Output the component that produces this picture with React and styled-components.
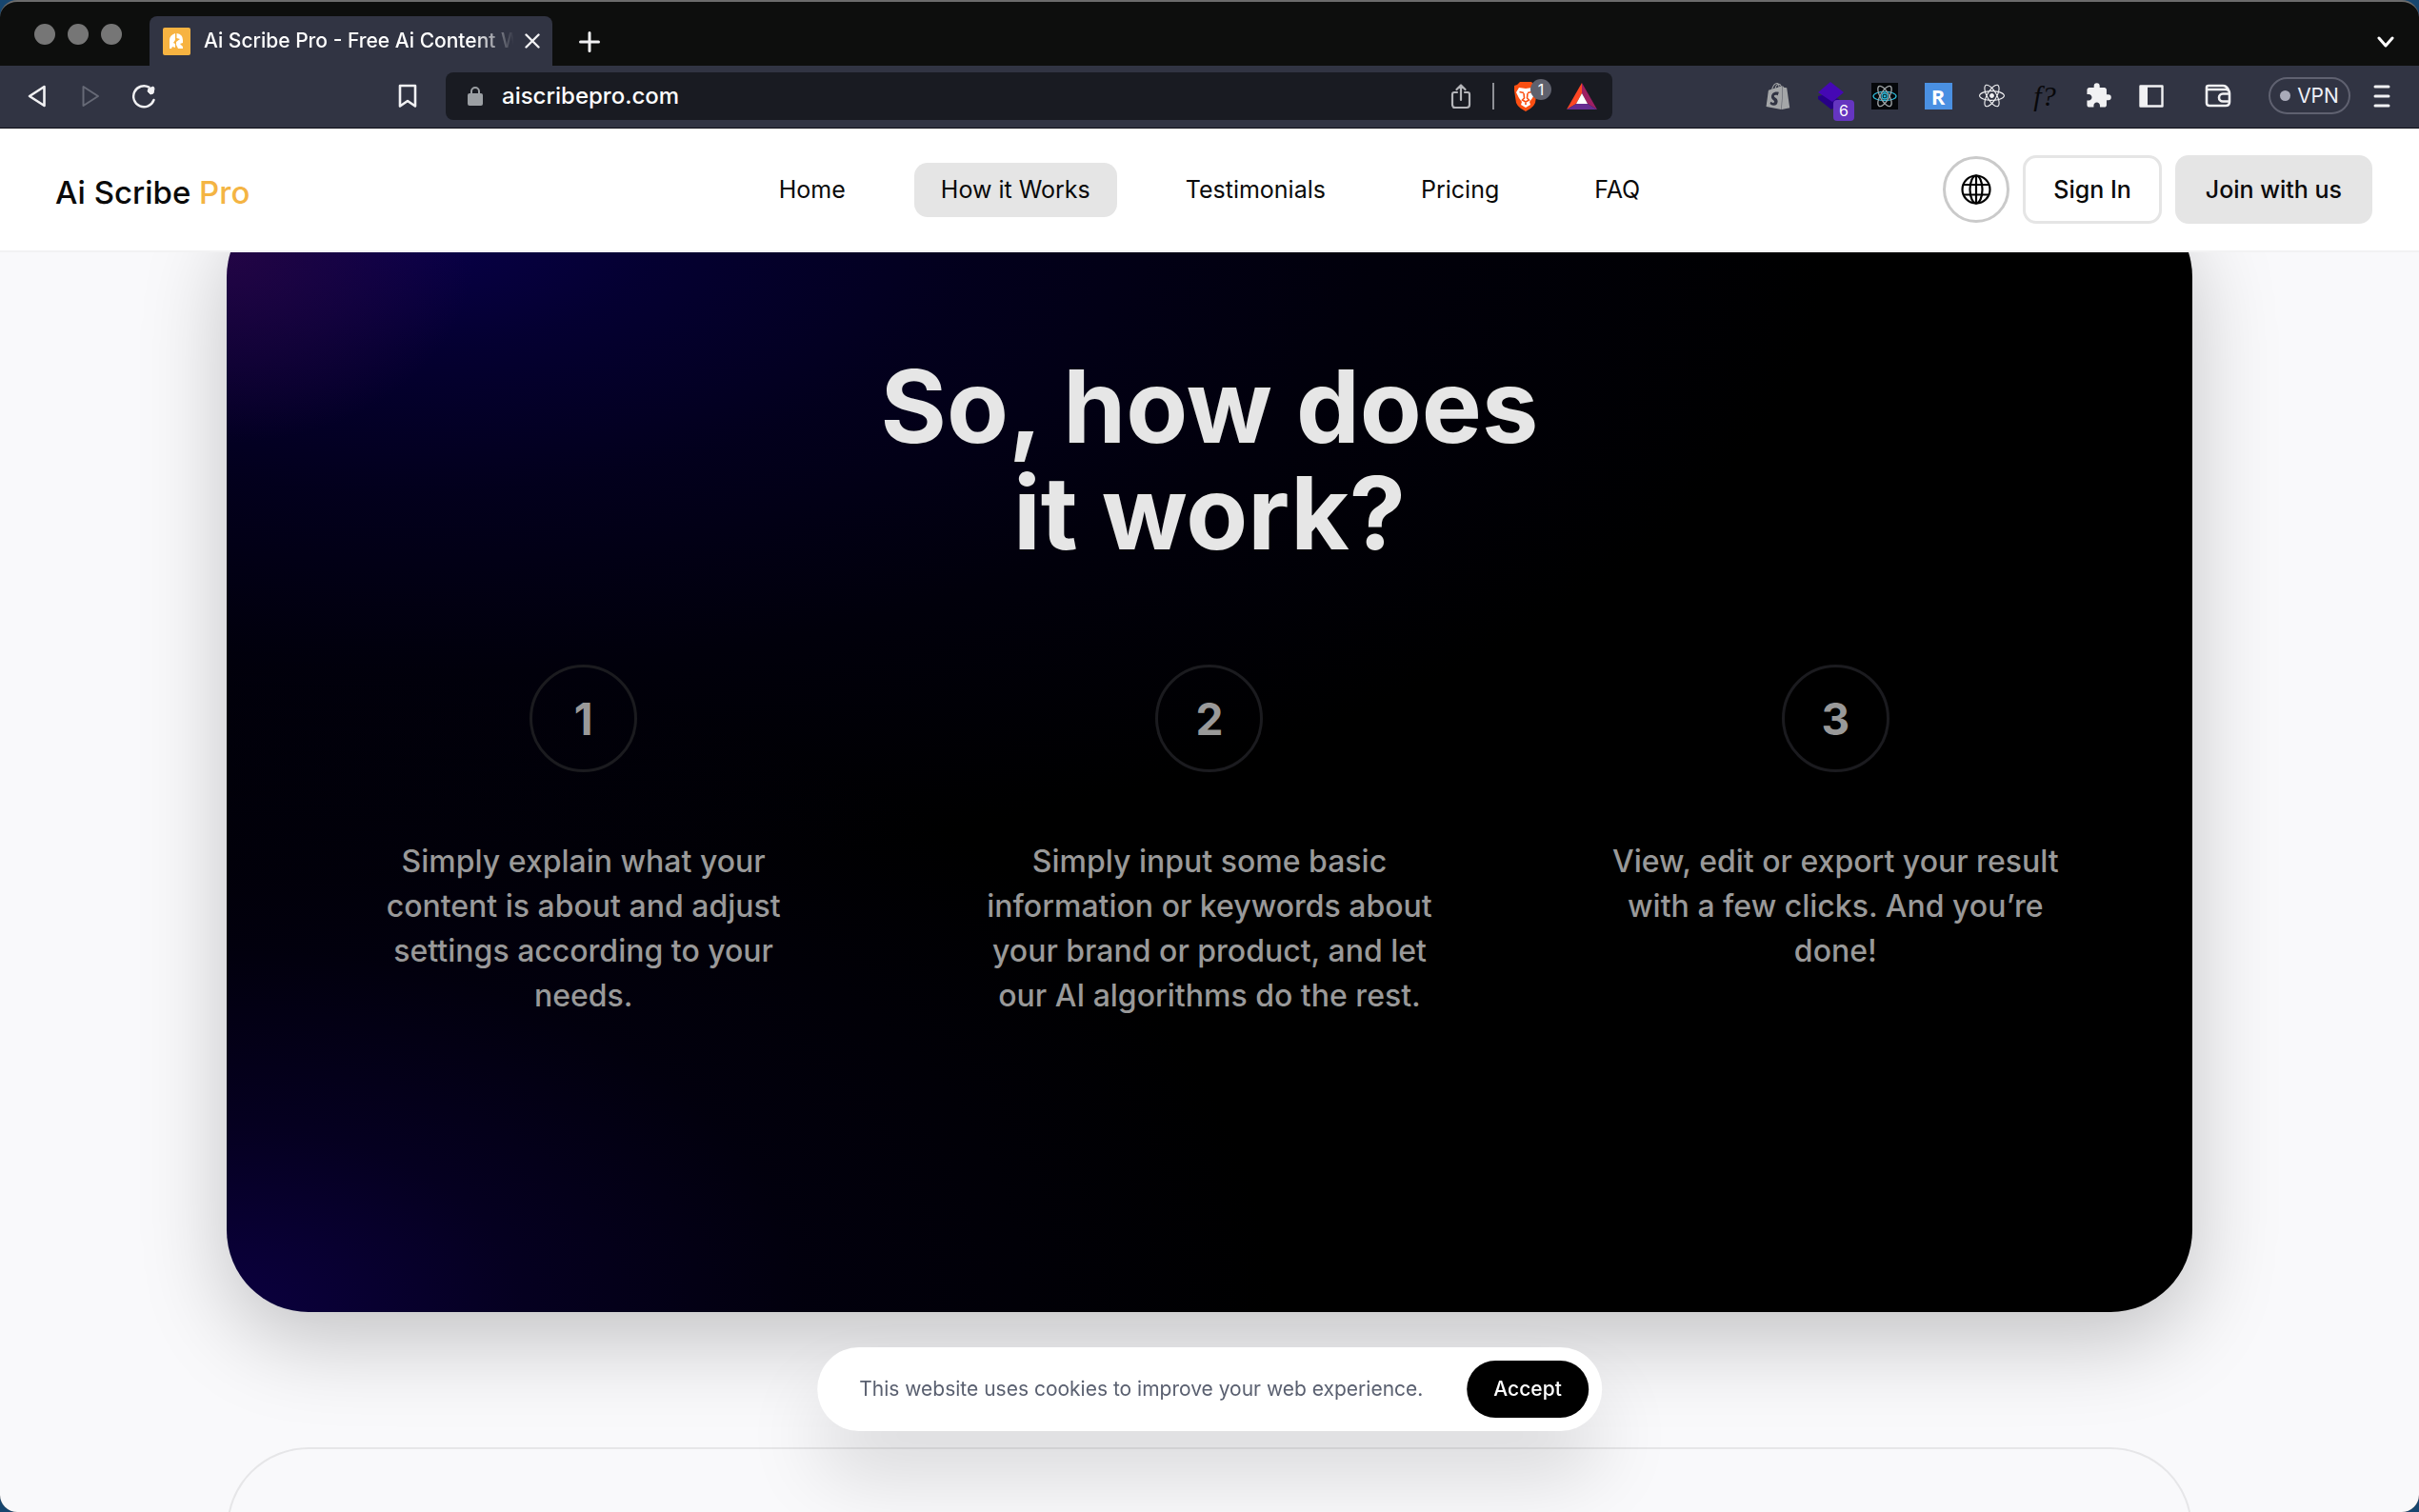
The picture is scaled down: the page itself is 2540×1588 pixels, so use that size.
import React from "react";
import styled, { createGlobalStyle } from "styled-components";
import { MdExtension } from "react-icons/md";
import { SiShopify } from "react-icons/si";
import { FaReact } from "react-icons/fa";

const GlobalStyle = createGlobalStyle`
  *, *::before, *::after { box-sizing: border-box; }
  body { margin: 0; background: #17466f; font-family: Inter, "Liberation Sans", sans-serif; }
  button, input { font-family: inherit; }
  svg { display: block; flex: none; }
`;

const BrowserWindow = styled.div`
  height: 100vh;
  display: flex;
  flex-direction: column;
  overflow: hidden;
  border-radius: 18px;
  border-top: 2px solid #6b6b6b;
  background: #0d0e0d;
`;

const TabStrip = styled.div`
  display: flex;
  align-items: flex-end;
  height: 67px;
  padding: 0 20px 0 36px;
`;

const TrafficLights = styled.div`
  display: flex;
  align-self: center;
  gap: 13px;
  width: 121px;
`;

const TrafficLight = styled.button`
  width: 22px;
  height: 22px;
  padding: 0;
  border: 0;
  border-radius: 50%;
  background: #767676;
`;

const Tab = styled.div`
  display: flex;
  align-items: center;
  width: 423px;
  height: 52px;
  padding: 0 13px 0 14px;
  border-radius: 8px 8px 0 0;
  background: #313443;
  color: #fff;
`;

const TabTitle = styled.span`
  flex: 1;
  margin: 0 12px 0 14px;
  overflow: hidden;
  white-space: nowrap;
  font-size: 21px;
  line-height: 28px;
  font-weight: 500;
  mask-image: linear-gradient(to right, #000 285px, transparent 326px);
`;

const IconButton = styled.button`
  position: relative;
  display: grid;
  place-items: center;
  flex: none;
  width: ${(p) => p.$w || 30}px;
  height: ${(p) => p.$h || 30}px;
  padding: 0;
  border: 0;
  background: none;
  color: ${(p) => p.$color || "#f1f1f3"};
`;

const NewTab = styled(IconButton)`
  align-self: center;
  margin: 16px auto 0 24px;
`;

const TabSearch = styled(IconButton)`
  align-self: center;
  margin-top: 16px;
`;

const Toolbar = styled.div`
  display: grid;
  grid-template-columns: 468px minmax(0, 1225px) 1fr;
  align-items: center;
  height: 66px;
  padding-bottom: 2px;
  background: #313443;
  border-bottom: 1px solid #0d0e16;
`;

const HistoryGroup = styled.div`
  display: flex;
  align-items: center;
  gap: 26px;
  padding: 0 30px 0 24px;
  > :last-child { margin-left: auto; }
`;

const AddressBar = styled.div`
  display: flex;
  align-items: center;
  height: 50px;
  padding: 0 16px 0 20px;
  border-radius: 8px;
  background: #191b22;
`;

const AddressInput = styled.input`
  flex: 1;
  min-width: 0;
  margin-left: 17px;
  padding: 0;
  border: 0;
  outline: 0;
  background: none;
  color: #fff;
  font-size: 24px;
  line-height: 34px;
  font-weight: 500;
`;

const Divider = styled.span`
  width: 2px;
  height: 28px;
  margin: 0 18px 0 22px;
  background: #8e9096;
`;

const Shields = styled(IconButton)`
  margin-right: 28px;
`;

const Count = styled.span`
  position: absolute;
  left: ${(p) => p.$left};
  top: ${(p) => p.$top};
  display: grid;
  place-items: center;
  width: 22px;
  height: 22px;
  border-radius: ${(p) => (p.$round ? "50%" : "4px")};
  background: ${(p) => (p.$round ? "#5f616d" : "#6535c0")};
  color: #fff;
  font-size: 16px;
  line-height: 22px;
`;

const Extensions = styled.div`
  display: flex;
  align-items: center;
  justify-content: flex-end;
  gap: 26px;
  padding-right: 24px;
`;

const LetterTile = styled.span`
  display: grid;
  place-items: center;
  width: 29px;
  height: 28px;
  background: ${(p) => p.$bg};
  color: #fff;
  font: 700 22px/28px "Open Sans", sans-serif;
`;

const Script = styled.span`
  color: #08080a;
  font: italic 30px/30px "Liberation Serif", serif;
`;

const Wallet = styled(IconButton)`
  margin-left: 14px;
`;

const VpnButton = styled.button`
  display: flex;
  align-items: center;
  justify-content: center;
  gap: 7px;
  width: 86px;
  height: 39px;
  margin: 0 -8px 0 12px;
  padding: 0;
  border: 2px solid #5f6170;
  border-radius: 20px;
  background: none;
  color: #eef0f8;
  font-size: 21px;
  line-height: 24px;
  &::before {
    content: "";
    width: 11px;
    height: 11px;
    border-radius: 50%;
    background: #a9abb9;
  }
`;

const SiteHeader = styled.header`
  position: relative;
  z-index: 2;
  display: grid;
  grid-template-columns: 1fr auto 1fr;
  align-items: center;
  flex: none;
  height: 130px;
  padding: 0 49px;
  background: #fff;
  border-bottom: 2px solid #f2f2f3;
`;

const Logo = styled.a`
  padding: 6px 0 0 9px;
  color: #0a0a0a;
  font-size: 33px;
  line-height: 36px;
  font-weight: 500;
  text-decoration: none;
  span { color: #f4b443; }
`;

const SiteNav = styled.nav`
  display: flex;
  gap: 44px;
`;

const NavLink = styled.a`
  padding: 0 28px;
  border-radius: 14px;
  background: ${(p) => (p.$active ? "#e5e5e5" : "transparent")};
  color: #0a0a0a;
  font-size: 25px;
  line-height: 57px;
  text-decoration: none;
`;

const Actions = styled.div`
  display: flex;
  align-items: center;
  justify-content: flex-end;
  gap: 14px;
`;

const LanguageButton = styled.button`
  display: grid;
  place-items: center;
  width: 70px;
  height: 70px;
  padding: 0;
  border: 3px solid #cacaca;
  border-radius: 50%;
  background: #fff;
`;

const ActionButton = styled.button`
  height: 72px;
  padding: 0 29px;
  border: 3px solid #e5e5e5;
  border-radius: 14px;
  background: ${(p) => (p.$filled ? "#e5e5e5" : "#fff")};
  color: #0a0a0a;
  font-size: 25px;
  line-height: 30px;
  font-weight: 500;
`;

const Page = styled.main`
  flex: 1;
  min-height: 0;
  overflow: hidden;
  padding: 0 238px;
  background: #f9f9fb;
`;

const HowItWorks = styled.section`
  margin: -60px 0 142px;
  padding: 166px 46px 309px;
  border-radius: 86px;
  text-align: center;
  background:
    radial-gradient(ellipse 260px 200px at 0 60px, rgba(42, 6, 72, 0.8), transparent),
    radial-gradient(ellipse 1500px 680px at 9% 40px, #08004a, rgba(5, 0, 58, 0.85) 18%, rgba(4, 0, 44, 0.65) 40%, rgba(2, 0, 22, 0.5) 68%, transparent),
    radial-gradient(ellipse 1100px 700px at 0 100%, #0b0040, rgba(6, 0, 38, 0.85) 28%, rgba(3, 0, 22, 0.6) 55%, transparent),
    #000;
  box-shadow: 0 30px 90px rgba(0, 0, 0, 0.22);
`;

const Title = styled.h2`
  margin: 0 0 103px;
  color: #e6e6e6;
  font-size: 106px;
  line-height: 112px;
  font-weight: 700;
`;

const Steps = styled.ol`
  display: grid;
  grid-template-columns: repeat(3, 1fr);
  margin: 0;
  padding: 0;
  list-style: none;
`;

const Step = styled.li`
  display: flex;
  flex-direction: column;
  align-items: center;
  gap: 70px;
`;

const StepNumber = styled.span`
  display: grid;
  place-items: center;
  width: 113px;
  height: 113px;
  border: 3px solid #1b1b1f;
  border-radius: 50%;
  color: #999;
  font-size: 46px;
  line-height: 56px;
  font-weight: 700;
`;

const StepText = styled.p`
  max-width: 490px;
  margin: 0;
  color: #999;
  font-size: 32px;
  line-height: 47px;
  font-weight: 500;
`;

const NextSection = styled.section`
  height: 400px;
  border: 2px solid #e6e6e8;
  border-radius: 86px;
`;

const CookieNotice = styled.aside`
  position: fixed;
  left: 50%;
  bottom: 85px;
  transform: translateX(-50%);
  z-index: 3;
  display: flex;
  align-items: center;
  gap: 46px;
  padding: 14px 14px 14px 44px;
  border-radius: 44px;
  background: #fff;
  white-space: nowrap;
  box-shadow: 0 48px 80px rgba(0, 0, 0, 0.13);
`;

const CookieText = styled.p`
  margin: 0;
  color: #5a6070;
  font-size: 21px;
  line-height: 28px;
`;

const AcceptButton = styled.button`
  height: 60px;
  padding: 0 28px;
  border: 0;
  border-radius: 30px;
  background: #000;
  color: #fff;
  font-size: 21px;
  line-height: 28px;
  font-weight: 500;
`;

const Stroke = ({ w, h, sw = 2, children }) => (
  <svg width={w} height={h} viewBox={`0 0 ${w} ${h}`} fill="none" stroke="currentColor" strokeWidth={sw} strokeLinecap="round" strokeLinejoin="round" aria-hidden="true">
    {children}
  </svg>
);

const Favicon = () => (
  <svg width="29" height="29" viewBox="0 0 29 29" aria-hidden="true">
    <rect width="29" height="29" rx="2" fill="#f7b341" />
    <path d="M7 22v-9q0-5 6-7v7l-2 3 2 1v4l-3-1-1 2z" fill="#fff" />
    <path d="M14.5 6Q21 7 21 13v3l-3 1 3 3v2h-5l-2-4v-3l4-3-3.5-1z" fill="#fff" />
  </svg>
);

const Globe = () => (
  <Stroke w={34} h={34} sw={2.2}>
    <circle cx="17" cy="17" r="14.5" />
    <ellipse cx="17" cy="17" rx="6.5" ry="14.5" />
    <path d="M17 2.5v29M4.5 12h25M4.5 22.5h25" />
  </Stroke>
);

const BraveLion = () => (
  <svg width="26" height="32" viewBox="0 0 26 32" aria-hidden="true">
    <path d="M7 1h12l3 3 3 1v5l-2 13q-1 3-5 6l-5 3-5-3q-4-3-5-6L1 10V5l3-1z" fill="#fb4f12" />
    <path d="M6 7l7 1 7-1 3 5-3 6-3 4 1 3-5 3-5-3 1-3-3-4-3-6z" fill="#fff" />
    <path d="M6.5 11.5l4.5 1M19.5 11.5l-4.5 1M11 13l.5 5-2 2 3.5 2 3.5-2-2-2 .5-5M13 23v2" fill="none" stroke="#fb4f12" strokeWidth="1.6" />
  </svg>
);

const BatTriangle = () => (
  <svg width="32" height="28" viewBox="0 0 32 28" aria-hidden="true">
    <path d="M16 0L0 28l10-6 6-11z" fill="#ff4724" />
    <path d="M16 0l16 28-10-6-6-11z" fill="#9e1f63" />
    <path d="M0 28h32l-10-6H10z" fill="#662d91" />
    <path d="M16 11l6 11H10z" fill="#fff" />
  </svg>
);

const Layers = () => (
  <svg width="30" height="30" viewBox="0 0 30 30" aria-hidden="true">
    <path d="M1 15l4-1 18 4v5l-8 6L1 18z" fill="#270087" />
    <path d="M14 0l14 11-12 10L1 11z" fill="#4508b4" />
  </svg>
);

const ReactTile = () => (
  <svg width="28" height="28" viewBox="0 0 28 28" aria-hidden="true">
    <rect width="28" height="28" fill="#05070a" />
    <g fill="none" strokeWidth="1.3">
      <ellipse cx="14" cy="14" rx="12" ry="4.6" stroke="#2db7d6" />
      <ellipse cx="14" cy="14" rx="12" ry="4.6" stroke="#9da2a4" transform="rotate(60 14 14)" />
      <ellipse cx="14" cy="14" rx="12" ry="4.6" stroke="#9da2a4" transform="rotate(120 14 14)" />
      <circle cx="14" cy="14" r="3" stroke="#2db7d6" />
    </g>
    <circle cx="14" cy="14" r="1.5" fill="#2db7d6" />
  </svg>
);

const steps = [
  "Simply explain what your content is about and adjust settings according to your needs.",
  "Simply input some basic information or keywords about your brand or product, and let our AI algorithms do the rest.",
  "View, edit or export your result with a few clicks. And you’re done!",
];

const links = ["Home", "How it Works", "Testimonials", "Pricing", "FAQ"];

export default function App() {
  return (
    <>
      <GlobalStyle />
      <BrowserWindow>
        <TabStrip>
          <TrafficLights>
            <TrafficLight aria-label="Close window" />
            <TrafficLight aria-label="Minimize window" />
            <TrafficLight aria-label="Zoom window" />
          </TrafficLights>
          <Tab>
            <Favicon />
            <TabTitle>Ai Scribe Pro - Free Ai Content W</TabTitle>
            <IconButton $w={16} aria-label="Close tab">
              <Stroke w={16} h={16} sw={2.4}><path d="M1.5 1.5l13 13M14.5 1.5l-13 13" /></Stroke>
            </IconButton>
          </Tab>
          <NewTab aria-label="New tab">
            <Stroke w={22} h={22} sw={3}><path d="M11 1.5v19M1.5 11h19" /></Stroke>
          </NewTab>
          <TabSearch aria-label="Search tabs" $color="#fff">
            <Stroke w={18} h={12} sw={3}><path d="M2 2l7 8 7-8" /></Stroke>
          </TabSearch>
        </TabStrip>

        <Toolbar>
          <HistoryGroup>
            <IconButton aria-label="Back">
              <Stroke w={20} h={24} sw={2.6}><path d="M17.5 2v20L2 12z" /></Stroke>
            </IconButton>
            <IconButton aria-label="Forward" $color="#666976">
              <Stroke w={20} h={24} sw={2}><path d="M2.5 2v20L18 12z" /></Stroke>
            </IconButton>
            <IconButton aria-label="Reload">
              <svg width="26" height="26" viewBox="0 0 26 26" aria-hidden="true">
                <path d="M18.5 3.6A11 11 0 1 0 23.5 17" fill="none" stroke="currentColor" strokeWidth="2.4" strokeLinecap="round" />
                <path d="M18 5l5-2 1 2-1 5-3 1-3-3z" fill="currentColor" stroke="currentColor" strokeLinejoin="round" />
              </svg>
            </IconButton>
            <IconButton $w={20} aria-label="Bookmark">
              <Stroke w={20} h={26} sw={2.6}><path d="M2 2h16v21.5l-8-5.5-8 5.5z" /></Stroke>
            </IconButton>
          </HistoryGroup>
          <AddressBar>
            <IconButton $w={22} $color="#9b9fa3" aria-label="Site information">
              <svg width="16" height="20" viewBox="0 0 16 20" aria-hidden="true">
                <rect y="7" width="16" height="13" rx="2" fill="currentColor" />
                <path d="M4 8V5a4 4 0 0 1 8 0v3" fill="none" stroke="currentColor" strokeWidth="2" />
              </svg>
            </IconButton>
            <AddressInput aria-label="Address" defaultValue="aiscribepro.com" />
            <IconButton $w={22} $color="#b4b5b9" aria-label="Share">
              <Stroke w={22} h={28} sw={2.2}><path d="M7 10H4q-2 0-2 2v11q0 3 3 3h12q3 0 3-3V12q0-2-2-2h-3M11 18V3M6.5 7L11 2.5 15.5 7" /></Stroke>
            </IconButton>
            <Divider />
            <Shields $w={30} $h={34} aria-label="Shields">
              <BraveLion />
              <Count $round $left="20px" $top="-1px">1</Count>
            </Shields>
            <IconButton $w={32} aria-label="Rewards"><BatTriangle /></IconButton>
          </AddressBar>
          <Extensions>
            <IconButton $color="#a4a6a8" aria-label="Shopify"><SiShopify size={28} /></IconButton>
            <IconButton aria-label="Layers">
              <Layers />
              <Count $left="17px" $top="19px">6</Count>
            </IconButton>
            <IconButton aria-label="React tools"><ReactTile /></IconButton>
            <IconButton aria-label="R tools"><LetterTile $bg="#4a90e2">R</LetterTile></IconButton>
            <IconButton aria-label="React"><FaReact size={27} /></IconButton>
            <IconButton aria-label="Font finder"><Script>f?</Script></IconButton>
            <IconButton aria-label="Extensions"><MdExtension size={29} /></IconButton>
            <IconButton aria-label="Sidebar">
              <Stroke w={26} h={24} sw={2.4}><rect x="1.5" y="1.5" width="23" height="21" /><path d="M2 2h7v20H2z" fill="currentColor" stroke="none" /></Stroke>
            </IconButton>
            <Wallet aria-label="Wallet">
              <Stroke w={28} h={25} sw={2.6}>
                <path d="M26 10v9q0 4-4 4H5q-3 0-3-3V4q0-2 2-2h15q4 0 6 4.5M3 6h19q4 0 4 4M26 10.5h-7a4 4 0 0 0 0 8h7" />
              </Stroke>
            </Wallet>
            <VpnButton>VPN</VpnButton>
            <IconButton aria-label="Menu">
              <Stroke w={18} h={24} sw={3}><path d="M2 2h14M2 12h14M2 22h14" /></Stroke>
            </IconButton>
          </Extensions>
        </Toolbar>

        <SiteHeader>
          <Logo href="#home">Ai Scribe <span>Pro</span></Logo>
          <SiteNav>
            {links.map((label) => (
              <NavLink key={label} href="#" $active={label === "How it Works"}>{label}</NavLink>
            ))}
          </SiteNav>
          <Actions>
            <LanguageButton aria-label="Language"><Globe /></LanguageButton>
            <ActionButton>Sign In</ActionButton>
            <ActionButton $filled>Join with us</ActionButton>
          </Actions>
        </SiteHeader>

        <Page>
          <HowItWorks>
            <Title>So, how does<br />it work?</Title>
            <Steps>
              {steps.map((text, i) => (
                <Step key={text}>
                  <StepNumber>{i + 1}</StepNumber>
                  <StepText>{text}</StepText>
                </Step>
              ))}
            </Steps>
          </HowItWorks>
          <NextSection />
        </Page>
      </BrowserWindow>
      <CookieNotice>
        <CookieText>This website uses cookies to improve your web experience.</CookieText>
        <AcceptButton>Accept</AcceptButton>
      </CookieNotice>
    </>
  );
}
